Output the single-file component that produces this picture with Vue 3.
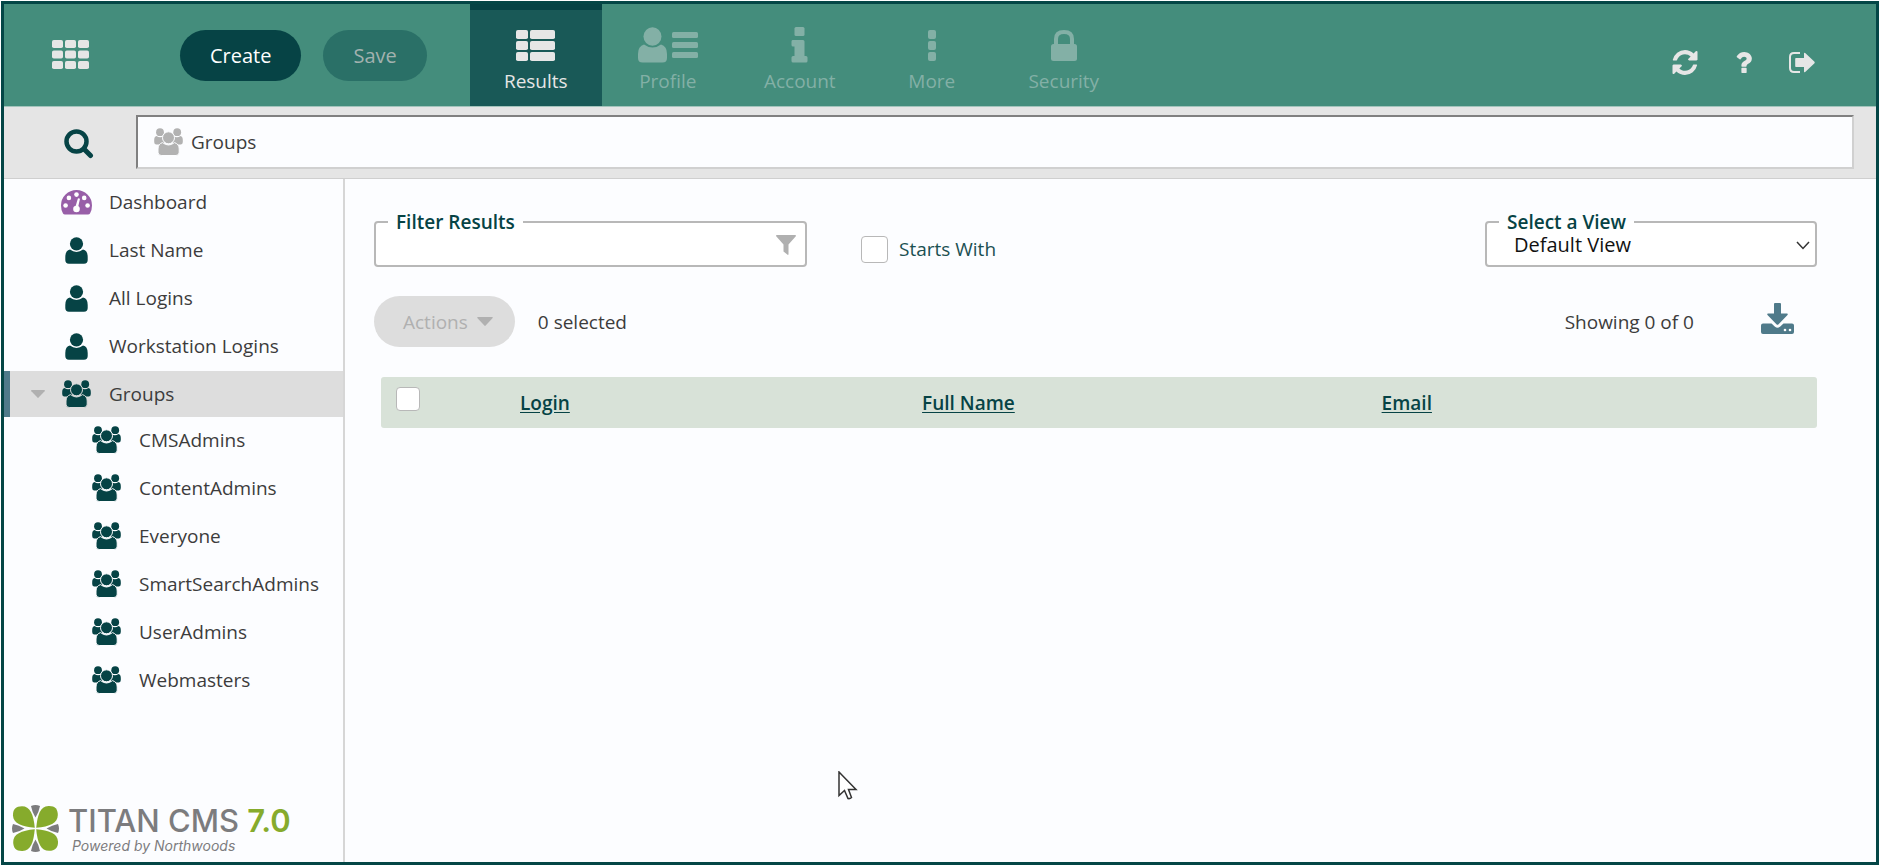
<template>
  <div class="page">
    <svg class="sprite" aria-hidden="true">
      <symbol id="i-user" viewBox="0 0 23 27">
        <circle cx="11.5" cy="6.8" r="6.6" />
        <path d="M5 12.6Q8 15 11.5 15T18 12.6Q22.7 13.6 22.7 20V23Q22.7 26.7 19 26.7H4Q.3 26.7 .3 23V20Q.3 13.6 5 12.6Z" />
      </symbol>
      <symbol id="i-group" viewBox="0 0 29 28">
        <circle cx="6" cy="4.2" r="3.9" />
        <circle cx="23.2" cy="4.2" r="3.9" />
        <path d="M2.5 8Q6 10.4 10 8V16.4H2Q.2 16.4 .2 14V12Q.2 8.6 2.5 8Z" />
        <path d="M26.5 8Q23 10.4 19 8V16.4H27Q28.8 16.4 28.8 14V12Q28.8 8.6 26.5 8Z" />
        <g class="cut">
          <path d="M8.5 14.6Q11.5 17 14.5 17T20.5 14.6Q25.2 16 25.2 21V24.2Q25.2 27.5 22 27.5H7.2Q4 27.5 4 24.2V21Q4 16 8.5 14.6Z" />
          <circle cx="14.5" cy="9.8" r="6" />
        </g>
      </symbol>
      <symbol id="i-dash" viewBox="0 0 31 25">
        <path d="M15.5 0A15.5 15.5 0 0 1 31 15.5Q31 20 29 23.5Q28.4 24.6 27 24.6H4Q2.6 24.6 2 23.5Q0 20 0 15.5A15.5 15.5 0 0 1 15.5 0Z" />
        <g fill="#fff">
          <circle cx="15.5" cy="4.6" r="2.3" />
          <circle cx="7.9" cy="7.9" r="2.3" />
          <circle cx="23.2" cy="7.9" r="2.3" />
          <circle cx="4.6" cy="15.5" r="2.3" />
          <circle cx="26.6" cy="15.5" r="2.3" />
          <circle cx="15.5" cy="19" r="3.3" />
          <path d="M14.3 17L17 8.3L19 8.8L16.9 18Z" />
        </g>
      </symbol>
      <symbol id="i-grid" viewBox="0 0 37 29">
        <template v-for="y in [0, 10.5, 21]" :key="y">
          <rect v-for="x in [0, 13, 26]" :key="x" :x="x" :y="y" width="11" height="8" rx="1.8" />
        </template>
      </symbol>
      <symbol id="i-results" viewBox="0 0 39 31">
        <template v-for="y in [0, 11, 22]" :key="y">
          <rect x="0" :y="y" width="12" height="9" rx="1.8" />
          <rect x="14" :y="y" width="25" height="9" rx="1.8" />
        </template>
      </symbol>
      <symbol id="i-profile" viewBox="0 0 61 36">
        <ellipse cx="15.5" cy="9.5" rx="9" ry="9.3" />
        <path d="M7 17.5Q11 20.5 15.5 20.5T24 17.5Q30 19 30 27V31Q30 35.5 25.5 35.5H5.5Q1 35.5 1 31V27Q1 19 7 17.5Z" />
        <rect x="35" y="5" width="26" height="6" rx="1.5" />
        <rect x="35" y="15" width="26" height="6" rx="1.5" />
        <rect x="35" y="25" width="26" height="6" rx="1.5" />
      </symbol>
      <symbol id="i-info" viewBox="0 0 17 36">
        <rect x="3.5" y="0" width="10" height="9" rx="1.5" />
        <path d="M1.5 13H12Q13.5 13 13.5 14.5V29H15Q16.5 29 16.5 30.5V34Q16.5 35.5 15 35.5H2Q.5 35.5 .5 34V30.5Q.5 29 2 29H3.5V19.5H2Q.5 19.5 .5 18V14.5Q.5 13 1.5 13Z" />
      </symbol>
      <symbol id="i-more" viewBox="0 0 8 31">
        <rect v-for="y in [0, 11, 22]" :key="y" x="0" :y="y" width="8" height="9" rx="2" />
      </symbol>
      <symbol id="i-lock" viewBox="0 0 26 31">
        <path d="M5 15V9Q5 2 13 2T21 9V15" fill="none" stroke="currentColor" stroke-width="4" />
        <rect x="0" y="14" width="26" height="17" rx="2.5" />
      </symbol>
      <symbol id="i-refresh" viewBox="128 128 1536 1536">
        <path d="M1639 1056q0 5-1 7-64 268-268 434.500t-478 166.500q-146 0-282.500-55t-243.500-157l-129 129q-19 19-45 19t-45-19-19-45v-448q0-26 19-45t45-19h448q26 0 45 19t19 45-19 45l-137 137q71 66 161 102t187 36q134 0 250-65t186-179q11-17 53-117 8-23 30-23h192q13 0 22.500 9.500t9.500 22.500zm25-800v448q0 26-19 45t-45 19h-448q-26 0-45-19t-19-45 19-45l138-138q-148-137-349-137-134 0-250 65t-186 179q-11 17-53 117-8 23-30 23h-199q-13 0-22.500-9.500t-9.500-22.500v-7q65-268 270-434.500t480-166.500q146 0 284 55.500t245 156.500l130-129q19-19 45-19t45 19 19 45z" />
      </symbol>
      <symbol id="i-help" viewBox="384 256 1024 1280">
        <path d="M1088 1256v240q0 16-12 28t-28 12h-240q-16 0-28-12t-12-28v-240q0-16 12-28t28-12h240q16 0 28 12t12 28zm316-600q0 54-15.500 101t-35 76.500-55 59.500-57.500 43.500-61 35.500q-41 23-68.500 65t-27.500 67q0 17-12 32.500t-28 15.500h-240q-15 0-25.500-18.500t-10.500-37.500v-45q0-83 65-156.500t143-108.500q59-27 84-56t25-76q0-42-46.500-74t-107.500-32q-65 0-108 29-35 25-107 115-13 16-31 16-12 0-25-8l-164-125q-13-10-15.500-25t5.500-28q160-266 464-266 80 0 161 31t146 83 106 127.500 41 158.500z" />
      </symbol>
      <symbol id="i-exit" viewBox="0 0 26 21">
        <path d="M11 1H5Q1 1 1 5V16Q1 20 5 20H11" fill="none" stroke="currentColor" stroke-width="2" />
        <path d="M7 6H15V1.500Q15 .2 16.200 1L25.500 9.800Q26 10.500 25.500 11.200L16.200 20Q15 20.800 15 19.500V15H7Q6.200 15 6.200 14.200V6.800Q6.200 6 7 6Z" />
      </symbol>
      <symbol id="i-search" viewBox="0 0 30 30">
        <circle cx="12.5" cy="12.5" r="10" fill="none" stroke="currentColor" stroke-width="4.500" />
        <path d="M20 20L26.500 26.500" stroke="currentColor" stroke-width="5" stroke-linecap="round" />
      </symbol>
      <symbol id="i-funnel" viewBox="0 0 20 20">
        <path d="M.6 0H19.400Q20.300 .6 19.600 1.600L12.500 9.500V19.600Q12 20.200 11.300 19.600L7.500 16.400V9.500L.4 1.600Q-.3 .6 .6 0Z" />
      </symbol>
      <symbol id="i-caret" viewBox="0 0 14 8">
        <path d="M.6 0H13.400Q14.300 .4 13.600 1.200L7.600 7.600Q7 8.200 6.400 7.600L.4 1.200Q-.3 .4 .6 0Z" />
      </symbol>
      <symbol id="i-download" viewBox="0 0 33 31">
        <path d="M13 1Q13 0 14 0H19Q20 0 20 1V10.500H26Q27.300 11 26.500 12L17.300 21.400Q16.500 22 15.700 21.400L6.500 12Q5.700 11 7 10.500H13Z" />
        <path d="M2 20.500H10.500L14 23.800Q16.500 25.600 19 23.800L22.500 20.500H31Q33 20.500 33 22.500V29Q33 31 31 31H2Q0 31 0 29V22.500Q0 20.500 2 20.500Z" />
        <circle cx="24" cy="27" r="1.300" fill="#fff" />
        <circle cx="29" cy="27" r="1.300" fill="#fff" />
      </symbol>
    </svg>

    <div class="app">
      <header class="topbar">
        <button class="icon-btn apps" type="button" aria-label="Applications">
          <svg width="37" height="29"><use href="#i-grid" /></svg>
        </button>
        <div class="buttons">
          <button class="pill create" type="button">Create</button>
          <button class="pill save" type="button" disabled>Save</button>
        </div>
        <nav class="tabs">
          <button
            v-for="tab in tabs"
            :key="tab.label"
            type="button"
            :class="['tab', { active: tab.label === activeTab }]"
            @click="activeTab = tab.label"
          >
            <span class="tab-icon">
              <svg :width="tab.w" :height="tab.h"><use :href="'#' + tab.icon" /></svg>
            </span>
            <span>{{ tab.label }}</span>
          </button>
        </nav>
        <div class="tools">
          <button class="icon-btn" type="button" aria-label="Refresh">
            <svg width="26" height="25"><use href="#i-refresh" /></svg>
          </button>
          <button class="icon-btn" type="button" aria-label="Help">
            <svg width="17" height="21"><use href="#i-help" /></svg>
          </button>
          <button class="icon-btn" type="button" aria-label="Sign out">
            <svg width="26" height="21"><use href="#i-exit" /></svg>
          </button>
        </div>
      </header>

      <div class="searchbar">
        <button class="icon-btn search-btn" type="button" aria-label="Search">
          <svg width="30" height="30"><use href="#i-search" /></svg>
        </button>
        <div class="location">
          <svg width="29" height="28"><use href="#i-group" /></svg>
          <input v-model="location" type="text" aria-label="Location" />
        </div>
      </div>

      <div class="body">
        <aside class="sidebar">
          <ul class="tree">
            <li v-for="item in items" :key="item.label">
              <a href="#" :class="['node', { selected: item.selected, child: item.child }]" @click.prevent>
                <span class="toggle">
                  <svg v-if="item.selected" width="14" height="8"><use href="#i-caret" /></svg>
                </span>
                <span :class="['node-icon', item.icon]">
                  <svg v-if="item.icon === 'i-dash'" width="31" height="25"><use href="#i-dash" /></svg>
                  <svg v-else-if="item.icon === 'i-user'" width="23" height="27"><use href="#i-user" /></svg>
                  <svg v-else width="29" height="28"><use href="#i-group" /></svg>
                </span>
                {{ item.label }}
              </a>
            </li>
          </ul>
          <div class="brand">
            <svg width="47" height="47" viewBox="0 0 47 47" aria-hidden="true">
              <g fill="#86ab2c">
                <path id="leaf" d="M22.8 22.8C10 21.5 1.5 19 1 10.5C.8 4 4 1.2 10 1.2C18 1.2 21.5 9 22.8 22.8Z" />
                <use href="#leaf" transform="rotate(90 23.5 23.5)" />
                <use href="#leaf" transform="rotate(180 23.5 23.5)" />
                <use href="#leaf" transform="rotate(270 23.5 23.5)" />
              </g>
              <g fill="#7c7c7e">
                <path id="tip" d="M19 1Q23.5 -1 28 1Q27 7 23.5 12.5Q20 7 19 1Z" />
                <use href="#tip" transform="rotate(90 23.5 23.5)" />
                <use href="#tip" transform="rotate(180 23.5 23.5)" />
                <use href="#tip" transform="rotate(270 23.5 23.5)" />
              </g>
            </svg>
            <div>
              <div class="brand-name">TITAN CMS <b>7.0</b></div>
              <div class="brand-sub">Powered by Northwoods</div>
            </div>
          </div>
        </aside>

        <main class="content">
          <div class="row filters">
            <fieldset class="field filter">
              <legend><label for="filter">Filter Results</label></legend>
              <div class="field-inner">
                <input id="filter" v-model="filter" type="text" />
                <svg width="20" height="20"><use href="#i-funnel" /></svg>
              </div>
            </fieldset>
            <label class="starts">
              <input v-model="startsWith" type="checkbox" class="box large" />
              Starts With
            </label>
            <fieldset class="field view">
              <legend><label for="view">Select a View</label></legend>
              <div class="field-inner">
                <select id="view">
                  <option>Default View</option>
                </select>
                <svg class="chevron" width="14" height="9" viewBox="0 0 14 9">
                  <path d="M1 1L7 7.5L13 1" />
                </svg>
              </div>
            </fieldset>
          </div>

          <div class="row toolbar">
            <button class="pill actions" type="button" disabled>
              Actions
              <svg width="16" height="9"><use href="#i-caret" /></svg>
            </button>
            <span>0 selected</span>
            <span class="showing">Showing 0 of 0</span>
            <button class="icon-btn download" type="button" aria-label="Download">
              <svg width="33" height="31"><use href="#i-download" /></svg>
            </button>
          </div>

          <table class="results">
            <thead>
              <tr>
                <th class="c-check"><input type="checkbox" class="box" aria-label="Select all" /></th>
                <th class="c-login"><a href="#" @click.prevent>Login</a></th>
                <th class="c-name"><a href="#" @click.prevent>Full Name</a></th>
                <th><a href="#" @click.prevent>Email</a></th>
              </tr>
            </thead>
          </table>
        </main>
      </div>

      <svg class="pointer" width="20" height="30" viewBox="0 0 20 30" aria-hidden="true">
        <path d="M1 1V24.5L6.5 19.5L10 27.5Q12 28 13.5 26.5L10.5 18.5H18Z" />
      </svg>
    </div>
  </div>
</template>

<script setup>
import { ref } from 'vue'

const activeTab = ref('Results')
const location = ref('Groups')
const filter = ref('')
const startsWith = ref(false)

const tabs = [
  { label: 'Results', icon: 'i-results', w: 39, h: 31 },
  { label: 'Profile', icon: 'i-profile', w: 61, h: 36 },
  { label: 'Account', icon: 'i-info', w: 17, h: 36 },
  { label: 'More', icon: 'i-more', w: 8, h: 31 },
  { label: 'Security', icon: 'i-lock', w: 26, h: 31 }
]

const items = [
  { label: 'Dashboard', icon: 'i-dash' },
  { label: 'Last Name', icon: 'i-user' },
  { label: 'All Logins', icon: 'i-user' },
  { label: 'Workstation Logins', icon: 'i-user' },
  { label: 'Groups', icon: 'i-group', selected: true },
  { label: 'CMSAdmins', icon: 'i-group', child: true },
  { label: 'ContentAdmins', icon: 'i-group', child: true },
  { label: 'Everyone', icon: 'i-group', child: true },
  { label: 'SmartSearchAdmins', icon: 'i-group', child: true },
  { label: 'UserAdmins', icon: 'i-group', child: true },
  { label: 'Webmasters', icon: 'i-group', child: true }
]
</script>

<style>
body {
  margin: 0;
  background: #fff;
}
</style>

<style scoped>
* {
  box-sizing: border-box;
}
.page {
  display: flex;
  min-height: 100vh;
  padding: 1px 1px 3px;
  font-family: "Open Sans", sans-serif;
  font-size: 19px;
  line-height: 26px;
  color: #3c3c3c;
}
.page svg {
  display: block;
  flex: none;
  fill: currentColor;
}
.page .sprite {
  position: absolute;
  width: 0;
  height: 0;
}
.cut {
  stroke: var(--cut, #fcfdff);
  stroke-width: 1;
}
button,
input,
select {
  font: inherit;
  color: inherit;
}
.app {
  position: relative;
  flex: 1;
  display: flex;
  flex-direction: column;
  border: 3px solid #044646;
  background: #fcfdff;
}
.icon-btn {
  padding: 0;
  border: 0;
  background: none;
}

/* top bar */
.topbar {
  display: flex;
  height: 103px;
  background: #448d7c;
  border-bottom: 1px solid #a3c4bc;
  color: #e6e6e6;
}
.apps {
  width: 37px;
  margin: 0 91px 2px 48px;
}
.buttons {
  display: flex;
  gap: 22px;
  padding: 26px 0;
  margin-right: 43px;
}
.pill {
  height: 51px;
  padding: 0 30px;
  border: 0;
  border-radius: 26px;
  font-size: 20px;
}
.create {
  background: #064345;
  color: #fff;
}
.save {
  background: #2a7067;
  color: #a2b2af;
}
.tabs {
  display: flex;
}
.tab {
  display: flex;
  flex-direction: column;
  align-items: center;
  gap: 5px;
  width: 132px;
  padding: 17px 0 0;
  border: 0;
  border-top: 6px solid transparent;
  background: none;
  color: #83b0a6;
}
.tab.active {
  background: #195957;
  border-top-color: #064345;
  color: #e6e6e6;
}
.tab-icon {
  display: flex;
  align-items: center;
  height: 36px;
}
.tools {
  display: flex;
  align-items: center;
  gap: 37px;
  margin-left: auto;
  padding: 14px 61px 0 0;
}

/* search bar */
.searchbar {
  display: flex;
  padding: 8px 22px 9px 60px;
  background: #e5e5e5;
  border-bottom: 1px solid #cfcfcf;
}
.search-btn {
  margin-right: 42px;
  padding-top: 4px;
  color: #064345;
}
.location {
  flex: 1;
  display: flex;
  align-items: center;
  gap: 8px;
  height: 54px;
  padding: 0 16px;
  border: 2px solid;
  border-color: #808080 #d0d0d0 #d0d0d0 #808080;
  background: #fcfdff;
}
.location svg {
  color: #b2b2b2;
}
.location input {
  flex: 1;
  padding: 0;
  border: 0;
  outline: 0;
  background: none;
  color: #3c3c3c;
}

/* sidebar */
.body {
  flex: 1;
  display: flex;
}
.sidebar {
  display: flex;
  flex-direction: column;
  width: 341px;
  border-right: 2px solid #d6d6d6;
}
.tree {
  margin: 0;
  padding: 0;
  list-style: none;
}
.node {
  display: flex;
  align-items: center;
  height: 46px;
  margin-bottom: 2px;
  border-left: 6px solid transparent;
  color: #3c3c3c;
  text-decoration: none;
}
.node.selected {
  margin-bottom: 0;
  border-left-color: #4f7a8a;
  background: #dddddd;
  --cut: #dddddd;
}
.toggle {
  width: 48px;
  padding-left: 21px;
  color: #b0b0b0;
}
.child .toggle {
  width: 78px;
}
.node-icon {
  display: flex;
  justify-content: center;
  width: 37px;
  margin-right: 14px;
  color: #064345;
}
.node-icon.i-dash {
  color: #985fa8;
}
.brand {
  display: flex;
  gap: 9px;
  margin-top: auto;
  padding: 0 0 7px 8px;
  font-family: Inter, sans-serif;
  color: #7c7c7e;
}
.brand-name {
  font-size: 31px;
  line-height: 32px;
  font-weight: 500;
}
.brand-name b {
  font-weight: 600;
  color: #86ab2c;
}
.brand-sub {
  padding-left: 4px;
  font-size: 14px;
  line-height: 18px;
  font-style: italic;
}

/* content */
.content {
  flex: 1;
  padding: 30px 59px 30px 29px;
}
.row {
  display: flex;
}
.filters {
  align-items: flex-end;
}
.field {
  min-width: 0;
  margin: 0;
  padding: 0;
  border: 2px solid #b8b8b8;
  border-radius: 4px;
  background: #fff;
}
.field legend {
  margin-left: 12px;
  padding: 0 8px;
  font-weight: 600;
  color: #064345;
}
.filter {
  width: 433px;
}
.view {
  width: 332px;
  margin-left: auto;
}
.field-inner {
  display: flex;
  align-items: center;
  height: 28px;
  margin: -4px 0 6px;
  padding: 0 9px;
}
.field-inner input {
  flex: 1;
  height: 28px;
  border: 0;
  outline: 0;
  background: none;
}
.field-inner svg {
  color: #b0b0b0;
}
.field-inner select {
  flex: 1;
  height: 28px;
  padding: 0 0 0 18px;
  border: 0;
  outline: 0;
  appearance: none;
  background: none;
  font-size: 20px;
  color: #111;
}
.field-inner .chevron {
  margin-right: -4px;
  fill: none;
  stroke: #333;
  stroke-width: 1.5;
}
.starts {
  display: flex;
  align-items: center;
  gap: 11px;
  height: 36px;
  margin-left: 54px;
  color: #1b5052;
}
.box {
  flex: none;
  appearance: none;
  width: 24px;
  height: 24px;
  margin: 0;
  border: 1px solid #b8b8b8;
  border-radius: 4px;
  background: #fff;
}
.box.large {
  width: 27px;
  height: 27px;
}
.box:checked {
  background: #064345;
}
.toolbar {
  align-items: center;
  margin: 29px 0 30px;
}
.actions {
  display: flex;
  align-items: center;
  gap: 9px;
  margin-right: 23px;
  padding: 0 22px 0 29px;
  background: #dddddd;
  color: #b0b0b0;
  font-size: 19px;
}
.showing {
  margin-left: auto;
}
.download {
  margin: 0 23px 6px 67px;
  color: #4f7a8a;
}
.results {
  width: calc(100% - 7px);
  margin-left: 7px;
  border-collapse: collapse;
  table-layout: fixed;
  background: #d8e2d8;
  border-radius: 3px;
}
.results th {
  height: 51px;
  padding: 0;
  text-align: left;
  font-weight: 600;
}
.results a {
  color: #064345;
  text-underline-offset: 2px;
}
.results .c-check {
  width: 139px;
  padding: 10px 0 0 15px;
  vertical-align: top;
}
.c-check .box {
  display: block;
}
.c-login {
  width: 28%;
}
.c-name {
  width: 32%;
}

/* mouse pointer lies over the page */
.page .pointer {
  position: absolute;
  left: 834px;
  top: 767px;
  fill: #fff;
  stroke: #333;
  stroke-width: 1.5;
}
</style>
